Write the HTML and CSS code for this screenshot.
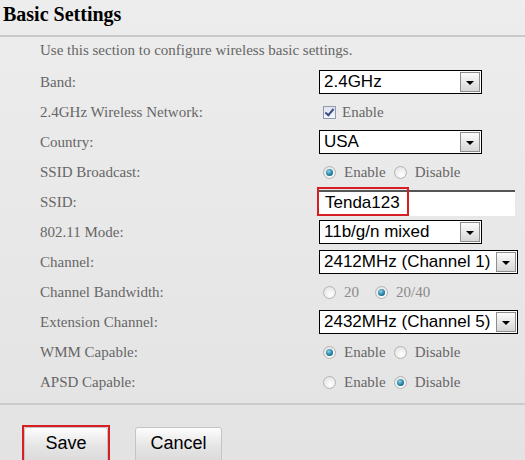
FILE: index.html
```html
<!DOCTYPE html>
<html lang="en">
<head>
  <meta charset="UTF-8">
  <title>Basic Settings</title>
  <link rel="stylesheet" href="styles.css">
</head>
<body>

<h1 class="title">Basic Settings</h1>

<div class="panel">
  <div class="desc">Use this section to configure wireless basic settings.</div>

  <div class="row">
    <span class="label">Band:</span>
    <div class="select"><span class="value">2.4GHz</span><span class="arrow"></span></div>
  </div>

  <div class="row">
    <span class="label">2.4GHz Wireless Network:</span>
    <span class="check"></span><span class="opt">Enable</span>
  </div>

  <div class="row">
    <span class="label">Country:</span>
    <div class="select"><span class="value">USA</span><span class="arrow"></span></div>
  </div>

  <div class="row">
    <span class="label">SSID Broadcast:</span>
    <span class="radio on"></span><span class="opt">Enable</span>
    <span class="radio"></span><span class="opt">Disable</span>
  </div>

  <div class="row">
    <span class="label">SSID:</span>
    <div class="ssid">
      <div class="input">Tenda123</div>
      <div class="mark"></div>
    </div>
  </div>

  <div class="row">
    <span class="label">802.11 Mode:</span>
    <div class="select"><span class="value">11b/g/n mixed</span><span class="arrow"></span></div>
  </div>

  <div class="row">
    <span class="label">Channel:</span>
    <div class="select wide"><span class="value">2412MHz (Channel 1)</span><span class="arrow"></span></div>
  </div>

  <div class="row">
    <span class="label">Channel Bandwidth:</span>
    <span class="radio"></span><span class="opt dim">20</span>
    <span class="radio on"></span><span class="opt dim">20/40</span>
  </div>

  <div class="row">
    <span class="label">Extension Channel:</span>
    <div class="select wide"><span class="value">2432MHz (Channel 5)</span><span class="arrow"></span></div>
  </div>

  <div class="row">
    <span class="label">WMM Capable:</span>
    <span class="radio on"></span><span class="opt">Enable</span>
    <span class="radio"></span><span class="opt">Disable</span>
  </div>

  <div class="row">
    <span class="label">APSD Capable:</span>
    <span class="radio"></span><span class="opt">Enable</span>
    <span class="radio on"></span><span class="opt">Disable</span>
  </div>
</div>

<div class="footer">
  <div class="marked"><button class="btn">Save</button></div>
  <button class="btn cancel">Cancel</button>
</div>

</body>
</html>
```

FILE: styles.css
```css
body, html {
  margin: 0;
  padding: 0;
  height: 100%;
  font-family: "Liberation Serif", "Times New Roman", serif;
  background: linear-gradient(#ededed, #e3e3e3);
  overflow: hidden;
}

.title {
  margin: 0;
  padding-left: 3px;
  font-size: 20px;
  line-height: 29px;
  font-weight: bold;
  color: #000;
  border-bottom: 2px solid #c9c9c9;
  box-sizing: border-box;
  height: 37px;
}

.panel {
  padding: 0 0 6px 40px;
  border-bottom: 2px solid #cbcbcb;
  color: #666;
  font-size: 15px;
}

.desc {
  line-height: 26px;
  margin-bottom: 4px;
}

.row {
  display: flex;
  align-items: center;
  height: 30px;
}

.label {
  width: 279px;
  flex: none;
}

.select {
  width: 163px;
  height: 24px;
  box-sizing: border-box;
  border: 1px solid #000;
  background: #fff;
  display: flex;
  align-items: center;
  font-family: "Liberation Sans", Arial, sans-serif;
  font-size: 17px;
  color: #000;
}

.select.wide {
  width: 199px;
}

.value {
  flex: 1;
  padding-left: 4px;
  white-space: nowrap;
}

.arrow {
  width: 18px;
  height: 18px;
  margin-right: 1px;
  border: 1px solid #8e8e8e;
  background: linear-gradient(#fbfbfb, #d6d6d6);
  display: flex;
  align-items: center;
  justify-content: center;
}

.arrow::after {
  content: "";
  border-left: 4px solid transparent;
  border-right: 4px solid transparent;
  border-top: 4px solid #000;
  margin-top: 2px;
}

.check {
  width: 11px;
  height: 11px;
  margin: 0 6px 0 4px;
  border: 1px solid #8f9bb0;
  background: linear-gradient(#dfe4ee, #f4f6fa);
  position: relative;
}

.check::after {
  content: "";
  position: absolute;
  left: 3px;
  top: 0;
  width: 3px;
  height: 7px;
  border-right: 2px solid #3b4f8c;
  border-bottom: 2px solid #3b4f8c;
  transform: rotate(40deg);
}

.radio {
  width: 11px;
  height: 11px;
  border-radius: 50%;
  border: 1px solid #b4b4b4;
  background: radial-gradient(circle at 60% 70%, #fff, #dedede);
  margin: 0 8px 0 4px;
  display: flex;
  align-items: center;
  justify-content: center;
}

.radio.on::after {
  content: "";
  width: 7px;
  height: 7px;
  border-radius: 50%;
  background: radial-gradient(circle at 40% 35%, #8fd3e8, #1f7a9c 60%, #0d4e6b);
}

.opt {
  margin-right: 4px;
  color: #666;
}

.opt.dim {
  color: #8a8a8a;
  margin-right: 12px;
}

.ssid {
  position: relative;
}

.input {
  width: 196px;
  height: 26px;
  box-sizing: border-box;
  margin-top: 2px;
  border-top: 2px solid #555;
  background: #fff;
  font-family: "Liberation Sans", Arial, sans-serif;
  font-size: 17px;
  color: #000;
  padding-left: 6px;
  line-height: 22px;
}

.mark {
  position: absolute;
  left: -2px;
  top: -1px;
  width: 92px;
  height: 29px;
  box-sizing: border-box;
  border: 2px solid #d81e25;
}

.footer {
  display: flex;
  align-items: flex-start;
  padding: 20px 0 0 22px;
}

.marked {
  border: 2px solid #d81e25;
  border-bottom: 0;
}

.btn {
  display: block;
  width: 84px;
  height: 36px;
  border: 1px solid #c4c4c4;
  border-radius: 3px;
  background: linear-gradient(#fdfdfd, #e6e6e6 50%, #dadada);
  font-family: "Liberation Sans", Arial, sans-serif;
  font-size: 18px;
  color: #000;
  padding: 0 0 4px;
}

.btn.cancel {
  width: 87px;
  margin: 2px 0 0 25px;
}
```
